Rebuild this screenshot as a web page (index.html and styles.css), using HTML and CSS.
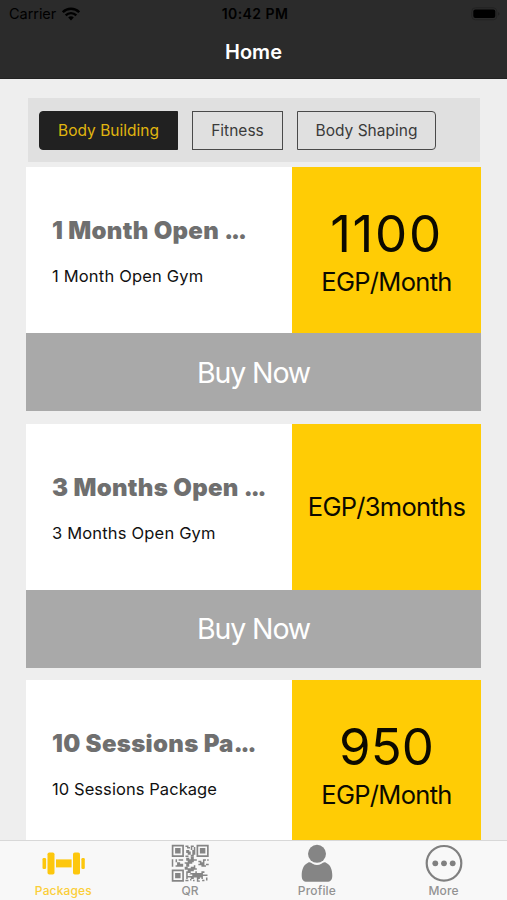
FILE: index.html
```html
<!DOCTYPE html>
<html lang="en">

    <head>
        <meta charset="UTF-8">
        <meta name="viewport" content="width=device-width, initial-scale=1.0">
        <title>Home</title>
        <link rel="stylesheet" href="styles.css">
    </head>

    <body>

        <header class="header">
            <div class="status">
                <div class="status-left">
                    <span class="carrier">Carrier</span>
                    <svg class="wifi" viewBox="0 0 18 14" width="18" height="14">
                        <path d="M0.8 5.2 C5.3 0.7 12.7 0.7 17.2 5.2" fill="none" stroke="#000" stroke-width="2.5"/>
                        <path d="M3.7 8.3 C6.6 5.4 11.4 5.4 14.3 8.3" fill="none" stroke="#000" stroke-width="2.4"/>
                        <path d="M6.2 10.4 C7.8 8.9 10.2 8.9 11.8 10.4 L9 13.4 Z" fill="#000"/>
                    </svg>
                </div>
                <div class="clock">10:42 PM</div>
                <div class="status-right">
                    <svg viewBox="0 0 30 14" width="30" height="14">
                        <rect x="0.8" y="0.8" width="25" height="12" rx="3.5" fill="none" stroke="#232323"/>
                        <rect x="2.3" y="2.6" width="22" height="8.4" rx="2" fill="#000"/>
                        <path d="M27.3 5 Q29.5 6.8 27.3 8.8 Z" fill="#1c1c1c"/>
                    </svg>
                </div>
            </div>
            <h1 class="heading">Home</h1>
        </header>

        <main class="content">

            <div class="filters">
                <button class="filter filter-active">Body Building</button>
                <button class="filter filter-middle">Fitness</button>
                <button class="filter filter-last">Body Shaping</button>
            </div>

            <section class="card">
                <div class="card-top">
                    <div class="info">
                        <h2 class="name">1 Month Open <span class="dots">...</span></h2>
                        <p class="detail detail-wide">1 Month Open Gym</p>
                    </div>
                    <div class="price">
                        <span class="amount amount-wide">1100</span>
                        <span class="period">EGP/Month</span>
                    </div>
                </div>
                <button class="buy">Buy Now</button>
            </section>

            <section class="card">
                <div class="card-top">
                    <div class="info">
                        <h2 class="name">3 Months Open <span class="dots">...</span></h2>
                        <p class="detail detail-wide">3 Months Open Gym</p>
                    </div>
                    <div class="price">
                        <span class="period">EGP/3months</span>
                    </div>
                </div>
                <button class="buy">Buy Now</button>
            </section>

            <section class="card">
                <div class="card-top">
                    <div class="info">
                        <h2 class="name">10 Sessions Pa<span class="dots">...</span></h2>
                        <p class="detail">10 Sessions Package</p>
                    </div>
                    <div class="price">
                        <span class="amount">950</span>
                        <span class="period">EGP/Month</span>
                    </div>
                </div>
            </section>

        </main>

        <nav class="tabs">
            <a class="tab tab-active">
                <svg viewBox="0 0 44 38" width="44" height="38" fill="#fdc70d">
                    <rect x="1.5" y="14" width="3.6" height="11" rx="1.2"/>
                    <rect x="6.5" y="8.5" width="7" height="22" rx="1.8"/>
                    <rect x="15" y="15.4" width="15.6" height="8"/>
                    <rect x="32" y="8.5" width="7" height="22" rx="1.8"/>
                    <rect x="40.4" y="14" width="3.4" height="11" rx="1.2"/>
                </svg>
                <span>Packages</span>
            </a>
            <a class="tab">
                <svg viewBox="0 0 25 25" width="38" height="38" fill="#858585">
                    <path fill-rule="evenodd" d="M0.5 0.5h8v8h-8zM1.6 1.6v5.8h5.8v-5.8zM2.7 2.7h3.6v3.6h-3.6zM16.8 0.5h8v8h-8zM17.9 1.6v5.8h5.8v-5.8zM19 2.7h3.6v3.6h-3.6zM0.5 16.8h8v8h-8zM1.6 17.9v5.8h5.8v-5.8zM2.7 19h3.6v3.6h-3.6z"/>
                    <path d="M9.5 1h2v1h1v1h-2v-1h-1zM13 1h2v1h-1v2h-1zM15 2h1v2h-1zM10 4h2v1h1v2h-2v-1h-1zM14 4h2v3h-1v1h-2v-1h1zM9.5 7.5h2v1h-2z"/>
                    <path d="M0.5 10h1v5h-1zM3 10h1v2h-1zM5 10h3v1h-3zM4 12h2v1h2v2h-5v-1h1zM10 9h2v1h1v-2h2v2h2v1h-2v1h-1v1h-2v2h-2v-2h-1v-1h2v-1h-1zM18 11h2v1h1v-2h2v1h-1v3h1v1h-3v-1h-2v-1h1v-1h-1zM23.8 10h1v1h-1zM23 13h1.8v1h-1.8z"/>
                    <path d="M9 15h2v1h2v-1h2v-1h1v2h1v1h-2v1h-2v1h-3v-1h1v-1h-2zM10 19h1v2h2v1h-2v1h-1zM13 19h3v-1h1v1h3v-1h2v1h-1v1h3v1h-3v2h-1v-1h-1v1h-2v-1h-2v1h-2v-2h1v-1h-2zM9.5 23.5h2v1h-2zM12.5 23h1v1h-1zM14.5 23.5h1v1h-1zM17 23h1v1h1v.8h-2zM20.5 23.5h1.5v1h-1.5zM23 22h1v2h-1z"/>
                </svg>
                <span>QR</span>
            </a>
            <a class="tab">
                <svg viewBox="0 0 32 38" width="32" height="38" fill="#858585">
                    <circle cx="16" cy="9.8" r="9"/>
                    <path d="M7 18.7 C9 17.7 10.3 19 11.6 19.8 C14.5 21.5 17.5 21.5 20.4 19.8 C21.7 19 23 17.7 25 18.7 C29.5 20.7 31.3 25.5 31.3 31.5 C31.3 36 29.5 37.8 26 37.8 H6 C2.5 37.8 0.7 36 0.7 31.5 C0.7 25.5 2.5 20.7 7 18.7 Z"/>
                </svg>
                <span>Profile</span>
            </a>
            <a class="tab">
                <svg viewBox="0 0 38 38" width="38" height="38" fill="#808080">
                    <circle cx="19" cy="19.3" r="17.3" fill="none" stroke="#808080" stroke-width="2.2"/>
                    <circle cx="10.3" cy="19.3" r="2.9"/>
                    <circle cx="19" cy="19.3" r="2.9"/>
                    <circle cx="27.7" cy="19.3" r="2.9"/>
                </svg>
                <span>More</span>
            </a>
        </nav>

    </body>

</html>
```
FILE: styles.css
```css
*
{
    box-sizing: border-box;
}

body
{
    margin: 0;
    height: 900px;
    display: flex;
    flex-direction: column;
    overflow: hidden;
    background-color: #eeeeee;
    font-family: Inter, "Liberation Sans", sans-serif;
}

h1, h2, p
{
    margin: 0;
}

button
{
    font-family: inherit;
    padding: 0;
    cursor: pointer;
}

svg
{
    display: block;
}

/* top bar */

.header
{
    flex: none;
    height: 79px;
    background-color: #2b2b2b;
    border-bottom: 1px solid #222222;
}

.status
{
    display: grid;
    grid-template-columns: 1fr auto 1fr;
    align-items: center;
    height: 27px;
    padding: 0 6px 0 9px;
    color: #000000;
}

.status-left
{
    display: flex;
    align-items: center;
    gap: 6px;
}

.carrier
{
    font-size: 14.5px;
    letter-spacing: -0.05px;
}

.clock
{
    font-size: 14px;
    font-weight: 600;
    letter-spacing: 0.45px;
}

.status-right
{
    justify-self: end;
}

.heading
{
    color: white;
    font-size: 20px;
    font-weight: 600;
    line-height: 50px;
    text-align: center;
}

/* packages */

.content
{
    flex: 1;
    min-height: 0;
    overflow: hidden;
    padding: 19px 26px 0;
}

.filters
{
    display: flex;
    gap: 14px;
    height: 64px;
    margin: 0 1px 5px 2px;
    padding: 13px 11px;
    background-color: #e0e0e0;
}

.filter
{
    height: 39px;
    width: 139px;
    border: 1px solid #4a4a4a;
    background-color: transparent;
    color: #3a3a3a;
    font-size: 15.5px;
}

.filter-active
{
    background-color: #212121;
    border-color: #212121;
    border-radius: 4px 0 0 4px;
    color: #e0b60f;
}

.filter-middle
{
    width: 91px;
}

.filter-last
{
    border-radius: 0 4px 4px 0;
}

.card
{
    margin-bottom: 12.5px;
}

.card-top
{
    display: flex;
    height: 166px;
}

.info
{
    flex: 1;
    padding: 49px 0 0 26px;
    background-color: white;
    white-space: nowrap;
}

.name
{
    color: #6f6f6f;
    font-size: 24px;
    font-weight: 900;
    letter-spacing: 0.3px;
    line-height: 30px;
}

.dots
{
    letter-spacing: -2.1px;
}

.detail
{
    margin-top: 20px;
    color: #111111;
    font-size: 16.5px;
    letter-spacing: 0.07px;
    line-height: 20px;
}

.detail-wide
{
    letter-spacing: 0.18px;
}

.price
{
    display: flex;
    flex-direction: column;
    align-items: center;
    justify-content: center;
    width: 189px;
    background-color: #ffcc05;
    color: #0c0a00;
}

.amount
{
    font-size: 51px;
    line-height: 62px;
}

.amount-wide
{
    letter-spacing: 1.7px;
}

.period
{
    font-size: 25.5px;
    letter-spacing: -0.7px;
    line-height: 33px;
}

.buy
{
    display: block;
    width: 100%;
    height: 78px;
    border: none;
    background-color: #a9a9a9;
    color: white;
    font-size: 28.5px;
    letter-spacing: -1.1px;
}

/* bottom tabs */

.tabs
{
    flex: none;
    display: grid;
    grid-template-columns: repeat(4, 1fr);
    height: 60px;
    border-top: 1px solid #d8d8d8;
    background-color: #f8f8f8;
}

.tab
{
    display: flex;
    flex-direction: column;
    align-items: center;
    padding-top: 3px;
    color: #929292;
    font-size: 12px;
    font-weight: 500;
    letter-spacing: 0.15px;
    line-height: 18px;
}

.tab-active
{
    color: #fbce38;
}
```
